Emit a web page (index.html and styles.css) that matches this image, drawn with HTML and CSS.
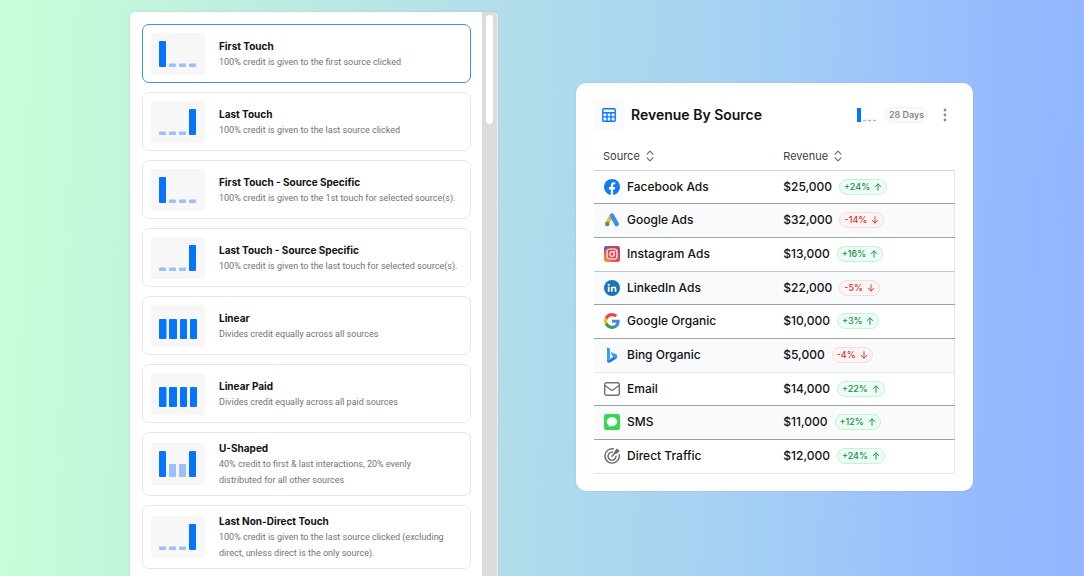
FILE: index.html
```html
<!DOCTYPE html>
<html lang="en">
<head>
<meta charset="utf-8">
<meta name="viewport" content="width=device-width, initial-scale=1">
<title>Attribution models</title>
<link rel="stylesheet" href="styles.css">
</head>
<body>
<svg class="defs" aria-hidden="true">
  <symbol id="chart-first" viewBox="0 0 54 42"><rect class="strong" x="8" y="8" width="7" height="26" rx="1"/><rect class="soft" x="18" y="30.500" width="7" height="3.500" rx="1"/><rect class="soft" x="28" y="30.500" width="7" height="3.500" rx="1"/><rect class="soft" x="38" y="30.500" width="7" height="3.500" rx="1"/></symbol>
  <symbol id="chart-last" viewBox="0 0 54 42"><rect class="soft" x="8" y="30.500" width="7" height="3.500" rx="1"/><rect class="soft" x="18" y="30.500" width="7" height="3.500" rx="1"/><rect class="soft" x="28" y="30.500" width="7" height="3.500" rx="1"/><rect class="strong" x="38" y="8" width="7" height="26" rx="1"/></symbol>
  <symbol id="chart-linear" viewBox="0 0 54 42"><rect class="strong" x="8" y="14" width="7.500" height="20" rx="1"/><rect class="strong" x="18" y="14" width="8" height="20" rx="1"/><rect class="strong" x="29" y="14" width="7" height="20" rx="1"/><rect class="strong" x="39" y="14" width="7" height="20" rx="1"/></symbol>
  <symbol id="chart-u" viewBox="0 0 54 42"><rect class="strong" x="8" y="8" width="7" height="26" rx="1"/><rect class="soft" x="18" y="21" width="7" height="13" rx="1"/><rect class="soft" x="28" y="21" width="7" height="13" rx="1"/><rect class="strong" x="38" y="8" width="7" height="26" rx="1"/></symbol>
  <symbol id="sort" viewBox="0 0 8 12"><path d="M1 4.200 4 1.200l3 3M1 7.800l3 3 3-3" fill="none" stroke="#66666b" stroke-width="1.100" stroke-linecap="round" stroke-linejoin="round"/></symbol>
  <symbol id="up" viewBox="0 0 8 8"><path d="M4 7.300V1M1.200 3.600 4 .9l2.800 2.700" fill="none" stroke="currentColor" stroke-linecap="round" stroke-linejoin="round"/></symbol>
  <symbol id="down" viewBox="0 0 8 8"><path d="M4 .7V7M1.200 4.400 4 7.100l2.800-2.700" fill="none" stroke="currentColor" stroke-linecap="round" stroke-linejoin="round"/></symbol>
</svg>
<main class="page">
  <section class="models" aria-label="Attribution model">
    <div class="model-list">
      <label class="model"><input class="model-input" type="radio" name="model" checked><svg class="model-chart"><use href="#chart-first"/></svg><span class="model-text"><span class="model-name">First Touch</span><span class="model-desc">100% credit is given to the first source clicked</span></span></label>
      <label class="model"><input class="model-input" type="radio" name="model"><svg class="model-chart"><use href="#chart-last"/></svg><span class="model-text"><span class="model-name">Last Touch</span><span class="model-desc">100% credit is given to the last source clicked</span></span></label>
      <label class="model"><input class="model-input" type="radio" name="model"><svg class="model-chart"><use href="#chart-first"/></svg><span class="model-text"><span class="model-name">First Touch - Source Specific</span><span class="model-desc">100% credit is given to the 1st touch for selected source(s).</span></span></label>
      <label class="model"><input class="model-input" type="radio" name="model"><svg class="model-chart"><use href="#chart-last"/></svg><span class="model-text"><span class="model-name">Last Touch - Source Specific</span><span class="model-desc">100% credit is given to the last touch for selected source(s).</span></span></label>
      <label class="model"><input class="model-input" type="radio" name="model"><svg class="model-chart"><use href="#chart-linear"/></svg><span class="model-text"><span class="model-name">Linear</span><span class="model-desc">Divides credit equally across all sources</span></span></label>
      <label class="model"><input class="model-input" type="radio" name="model"><svg class="model-chart"><use href="#chart-linear"/></svg><span class="model-text"><span class="model-name">Linear Paid</span><span class="model-desc">Divides credit equally across all paid sources</span></span></label>
      <label class="model"><input class="model-input" type="radio" name="model"><svg class="model-chart"><use href="#chart-u"/></svg><span class="model-text"><span class="model-name">U-Shaped</span><span class="model-desc">40% credit to first &amp; last interactions, 20% evenly<br>distributed for all other sources</span></span></label>
      <label class="model"><input class="model-input" type="radio" name="model"><svg class="model-chart"><use href="#chart-last"/></svg><span class="model-text"><span class="model-name">Last Non-Direct Touch</span><span class="model-desc">100% credit is given to the last source clicked (excluding<br>direct, unless direct is the only source).</span></span></label>
    </div>
    <div class="scroll-track"><div class="scroll-thumb"></div></div>
  </section>

  <section class="report">
    <header class="report-head">
      <span class="report-icon"><svg width="14" height="14" viewBox="0 0 14 14" fill="none" stroke="#0b78ff" stroke-width="1.400"><rect x=".8" y=".8" width="12.400" height="12.400" rx="1"/><path d="M1 4.700h12M1 8.900h12M5 5v8M9 5v8"/></svg></span>
      <h1 class="report-title">Revenue By Source</h1>
      <svg class="report-chart" width="20" height="14" viewBox="0 0 20 14"><rect class="strong" width="4" height="14" rx=".5"/><path d="M6 12.500h3M11 12.500h3M16 12.500h3" stroke="#8fc0ff" stroke-width="1.500"/></svg>
      <button class="period" type="button">28 Days</button>
      <button class="menu" type="button" aria-label="More options"><svg width="4" height="14" viewBox="0 0 4 14" fill="#8c8c90"><circle cx="2" cy="2" r="1.400"/><circle cx="2" cy="7" r="1.400"/><circle cx="2" cy="12" r="1.400"/></svg></button>
    </header>
    <table class="sources">
      <thead><tr><th><button class="sort" type="button">Source<svg><use href="#sort"/></svg></button></th><th><button class="sort" type="button">Revenue<svg><use href="#sort"/></svg></button></th></tr></thead>
      <tbody>
        <tr><td><span class="source"><svg viewBox="0 0 16 16"><circle cx="8" cy="8" r="8" fill="#0d7cf8"/><path d="M6.800 15.900v-5.500H4.900V8h1.900V6.400c0-2 1.100-3.100 2.900-3.100.8 0 1.500.1 1.500.1v1.900h-.9c-.9 0-1.200.6-1.200 1.200V8h2l-.3 2.400H9.100v5.500z" fill="#fff"/></svg>Facebook Ads</span></td><td><span class="amount">$25,000<span class="delta up">+24%<svg><use href="#up"/></svg></span></span></td></tr>
        <tr><td><span class="source"><svg viewBox="0 0 16 16"><path d="M7.500 3.800 3 11.600" stroke="#f9b233" stroke-width="4" stroke-linecap="round"/><path d="m8 3.600 4.700 8.500" stroke="#3c8bf7" stroke-width="4.400" stroke-linecap="round"/><circle cx="3.300" cy="12" r="2.200" fill="#35a162"/></svg>Google Ads</span></td><td><span class="amount">$32,000<span class="delta down">-14%<svg><use href="#down"/></svg></span></span></td></tr>
        <tr><td><span class="source"><svg viewBox="0 0 16 16"><defs><linearGradient id="ig" x1="0" y1="1" x2=".8" y2="0"><stop stop-color="#f6a545"/><stop offset=".4" stop-color="#e94e4a"/><stop offset="1" stop-color="#c53d60"/></linearGradient></defs><rect width="16" height="16" rx="2.500" fill="url(#ig)"/><path d="M0 4V2.500A2.500 2.500 0 0 1 2.500 0H10L3 1.800z" fill="#3975b9"/><rect x="3" y="3" width="10" height="10" rx="2.800" fill="none" stroke="#fff" stroke-width="1.200"/><circle cx="8" cy="8" r="2.300" fill="none" stroke="#fff" stroke-width="1.200"/><circle cx="10.900" cy="5.100" r=".7" fill="#fff"/></svg>Instagram Ads</span></td><td><span class="amount">$13,000<span class="delta up">+16%<svg><use href="#up"/></svg></span></span></td></tr>
        <tr><td><span class="source"><svg viewBox="0 0 16 16"><circle cx="8" cy="8" r="8" fill="#1b72b8"/><circle cx="4.700" cy="4.800" r="1.100" fill="#fff"/><path d="M3.800 6.700h1.800v5H3.800zM6.900 6.700h1.700v.7c.3-.5.900-.9 1.700-.9 1.600 0 2.100 1 2.100 2.500v2.700h-1.800V9.300c0-.7-.2-1.200-.9-1.200s-1.100.5-1.100 1.200v2.400H6.900z" fill="#fff"/></svg>LinkedIn Ads</span></td><td><span class="amount">$22,000<span class="delta down">-5%<svg><use href="#down"/></svg></span></span></td></tr>
        <tr><td><span class="source"><svg viewBox="0 0 48 48"><path fill="#ea4a42" d="M24 9.500c3.540 0 6.710 1.220 9.210 3.600l6.850-6.850C35.900 2.380 30.470 0 24 0 14.620 0 6.510 5.380 2.560 13.220l7.980 6.190C12.430 13.720 17.740 9.500 24 9.500z"/><path fill="#4285f4" d="M46.980 24.550c0-1.570-.15-3.090-.38-4.550H24v9.020h12.940c-.58 2.960-2.260 5.480-4.780 7.180l7.730 6c4.510-4.180 7.090-10.360 7.090-17.650z"/><path fill="#fbbc05" d="M10.530 28.590A14.500 14.500 0 0 1 9.770 24c0-1.600.27-3.140.76-4.590l-7.980-6.190A23.900 23.900 0 0 0 0 24c0 3.880.92 7.540 2.560 10.780z"/><path fill="#34a063" d="M24 48c6.480 0 11.930-2.130 15.890-5.810l-7.730-6c-2.150 1.450-4.920 2.300-8.160 2.300-6.260 0-11.570-4.220-13.470-9.910l-7.980 6.190C6.510 42.620 14.620 48 24 48z"/></svg>Google Organic</span></td><td><span class="amount">$10,000<span class="delta up">+3%<svg><use href="#up"/></svg></span></span></td></tr>
        <tr><td><span class="source"><svg viewBox="0 0 16 16"><path d="m3 .5 3 1.100v9.900l-3 3z" fill="#3c9bff"/><path d="m3 14 9.500-6v3.500L6 15.500c-1.500.7-3 0-3-1.500z" fill="#1380ef"/><path d="m6.700 5 5.500 2.300c.8.400 1.100 1 1.100 2s-.3 1.600-1 2.200L9.300 9.700 8.100 9z" fill="#3f9af8"/></svg>Bing Organic</span></td><td><span class="amount">$5,000<span class="delta down">-4%<svg><use href="#down"/></svg></span></span></td></tr>
        <tr><td><span class="source"><svg viewBox="0 0 16 16" fill="none" stroke="#727277" stroke-width="1.400" stroke-linejoin="round"><rect x=".7" y="1.700" width="14.600" height="12.600" rx="2"/><path d="m1 4.500 5.700 4.200c.8.600 1.800.6 2.600 0L15 4.500"/></svg>Email</span></td><td><span class="amount">$14,000<span class="delta up">+22%<svg><use href="#up"/></svg></span></span></td></tr>
        <tr><td><span class="source"><svg viewBox="0 0 16 16"><rect width="16" height="16" rx="2.500" fill="#37d84f"/><path d="M8 3.200c-3 0-5.200 2-5.200 4.500 0 1.600.9 3 2.300 3.800 0 .6-.3 1.100-.8 1.500 1 0 1.800-.4 2.300-.9l1.400.1c3 0 5.200-2 5.200-4.500S11 3.200 8 3.200z" fill="#fff"/></svg>SMS</span></td><td><span class="amount">$11,000<span class="delta up">+12%<svg><use href="#up"/></svg></span></span></td></tr>
        <tr><td><span class="source"><svg viewBox="0 0 16 16" fill="none" stroke="#66666b" stroke-width="1.400" stroke-linecap="round"><path d="M9.500.9a7.200 7.200 0 1 0 5.700 5.800"/><path d="M8.600 4.200A4 4 0 1 0 12 8.300"/><path d="m7.800 8.200 4-4"/><path d="m11 4.800.2-2 2-1.900.5 1.500 1.500.5-2 2z" fill="#66666b" stroke-width="1"/></svg>Direct Traffic</span></td><td><span class="amount">$12,000<span class="delta up">+24%<svg><use href="#up"/></svg></span></span></td></tr>
      </tbody>
    </table>
  </section>
</main>
</body>
</html>
```
FILE: styles.css
```css
* {
  box-sizing: border-box;
}

body {
  margin: 0;
  font-family: Inter, "Liberation Sans", sans-serif;
  color: #111113;
  background: linear-gradient(92deg, #c9ffd7 0%, #c3f5dc 12%, #b0dceb 48%, #a4cff4 70%, #94b9ff 92%, #93b6ff 100%);
}

button {
  font: inherit;
  color: inherit;
  margin: 0;
  padding: 0;
  border: 0;
  background: none;
  cursor: pointer;
}

.defs {
  position: absolute;
  width: 0;
  height: 0;
}

.strong {
  fill: #0575ff;
}

.soft {
  fill: #99c0fb;
}

.page {
  display: grid;
  grid-template-columns: minmax(0, 368fr) minmax(0, 397fr);
  gap: 78px;
  height: 100vh;
  overflow: hidden;
  padding: 12px 111px 0 130px;
}

.models {
  display: flex;
  min-height: 0;
  overflow: hidden;
  background: #fff;
  border-right: 1px solid #ececec;
  border-radius: 5px 5px 0 0;
  box-shadow: 0 0 2px rgb(80 110 130 / 25%);
}

.model-list {
  flex: 1;
  min-width: 0;
  display: flex;
  flex-direction: column;
  gap: 9px;
  padding: 12px 11px 12px 12px;
}

.model {
  display: flex;
  flex-shrink: 0;
  align-items: center;
  gap: 14px;
  min-height: 59px;
  padding: 7px 8px;
  border: 1px solid #e8e8ea;
  border-radius: 7px;
  cursor: pointer;
}

.model:has(:checked) {
  border-color: #3b90fa;
}

.model-input {
  appearance: none;
  position: absolute;
  margin: 0;
}

.model-chart {
  flex: none;
  width: 54px;
  height: 42px;
  border-radius: 3px;
  background: #f7f7f7;
}

.model-text {
  display: flex;
  flex-direction: column;
  white-space: nowrap;
}

.model-name {
  font-size: 10px;
  font-weight: 700;
  line-height: 16px;
}

.model-desc {
  font-family: Roboto, Inter, sans-serif;
  font-size: 9px;
  line-height: 16px;
  color: #737377;
}

.scroll-track {
  flex: none;
  width: 15px;
  padding: 3px 4px;
  background: #dcdcdc;
}

.scroll-thumb {
  height: 109px;
  border-radius: 4px;
  background: #fff;
}

.report {
  align-self: center;
  margin-bottom: 14px;
  padding: 17px 18px;
  background: #fff;
  border-radius: 10px;
  box-shadow: 0 0 2px rgb(80 110 130 / 20%);
}

.report-head {
  display: flex;
  align-items: center;
  margin-bottom: 12px;
}

.report-icon {
  display: grid;
  place-items: center;
  width: 30px;
  height: 30px;
  margin-right: 7px;
  border-radius: 4px;
  background: #f8fafd;
}

.report-title {
  flex: 1;
  margin: 0;
  font-size: 14px;
  font-weight: 600;
  line-height: 20px;
}

.report-chart {
  margin-right: 8px;
}

.period {
  height: 16px;
  padding: 0 3px;
  border: 1px solid #f2f2f4;
  border-radius: 8px;
  background: #fafafb;
  font-size: 9px;
  font-weight: 500;
  line-height: 14px;
  color: #77777b;
}

.menu {
  display: grid;
  place-items: center;
  width: 20px;
  height: 20px;
  margin-left: 7px;
}

.sources {
  width: 100%;
  table-layout: fixed;
  border-collapse: collapse;
}

.sources th {
  height: 28px;
  padding: 0 9px;
  text-align: left;
}

.sort {
  display: flex;
  align-items: center;
  gap: 6px;
  font-size: 11px;
  font-weight: 400;
  color: #3c3c40;
}

.sort svg {
  width: 8px;
  height: 12px;
}

.sources tbody {
  border-right: 1px solid #e5e7eb;
}

.sources tbody tr {
  height: 34px;
  border-top: 1px solid #a0a1a5;
}

.sources tbody tr:nth-child(3n + 1) {
  height: 33px;
}

.sources tbody tr:nth-child(1) {
  border-color: #d3d5d8;
}

.sources tbody tr:nth-child(4) {
  border-color: #c5c7ca;
}

.sources tbody tr:nth-child(7) {
  border-color: #e8eaed;
}

.sources tbody tr:last-child {
  border-bottom: 1px solid #e5e7eb;
}

.sources tbody tr:nth-child(even) {
  background: #f9fafc;
}

.sources td {
  padding: 0 9px;
}

.sources td:first-child {
  padding-left: 10px;
}

.source,
.amount {
  display: flex;
  align-items: center;
  gap: 7px;
  font-size: 12px;
  font-weight: 500;
  line-height: 16px;
}

.source svg {
  width: 16px;
  height: 16px;
  fill: none;
}

.delta {
  display: inline-flex;
  align-items: center;
  gap: 4px;
  height: 16px;
  padding: 0 4px;
  border: 1px solid;
  border-radius: 8px;
  font-size: 9px;
  font-weight: 500;
  line-height: 14px;
}

.delta svg {
  width: 8px;
  height: 8px;
}

.delta.up {
  color: #22904f;
  background: #ecfdf3;
  border-color: #c4f2d8;
}

.delta.down {
  color: #d03a3f;
  background: #fdf5f4;
  border-color: #fbdad7;
}
```
